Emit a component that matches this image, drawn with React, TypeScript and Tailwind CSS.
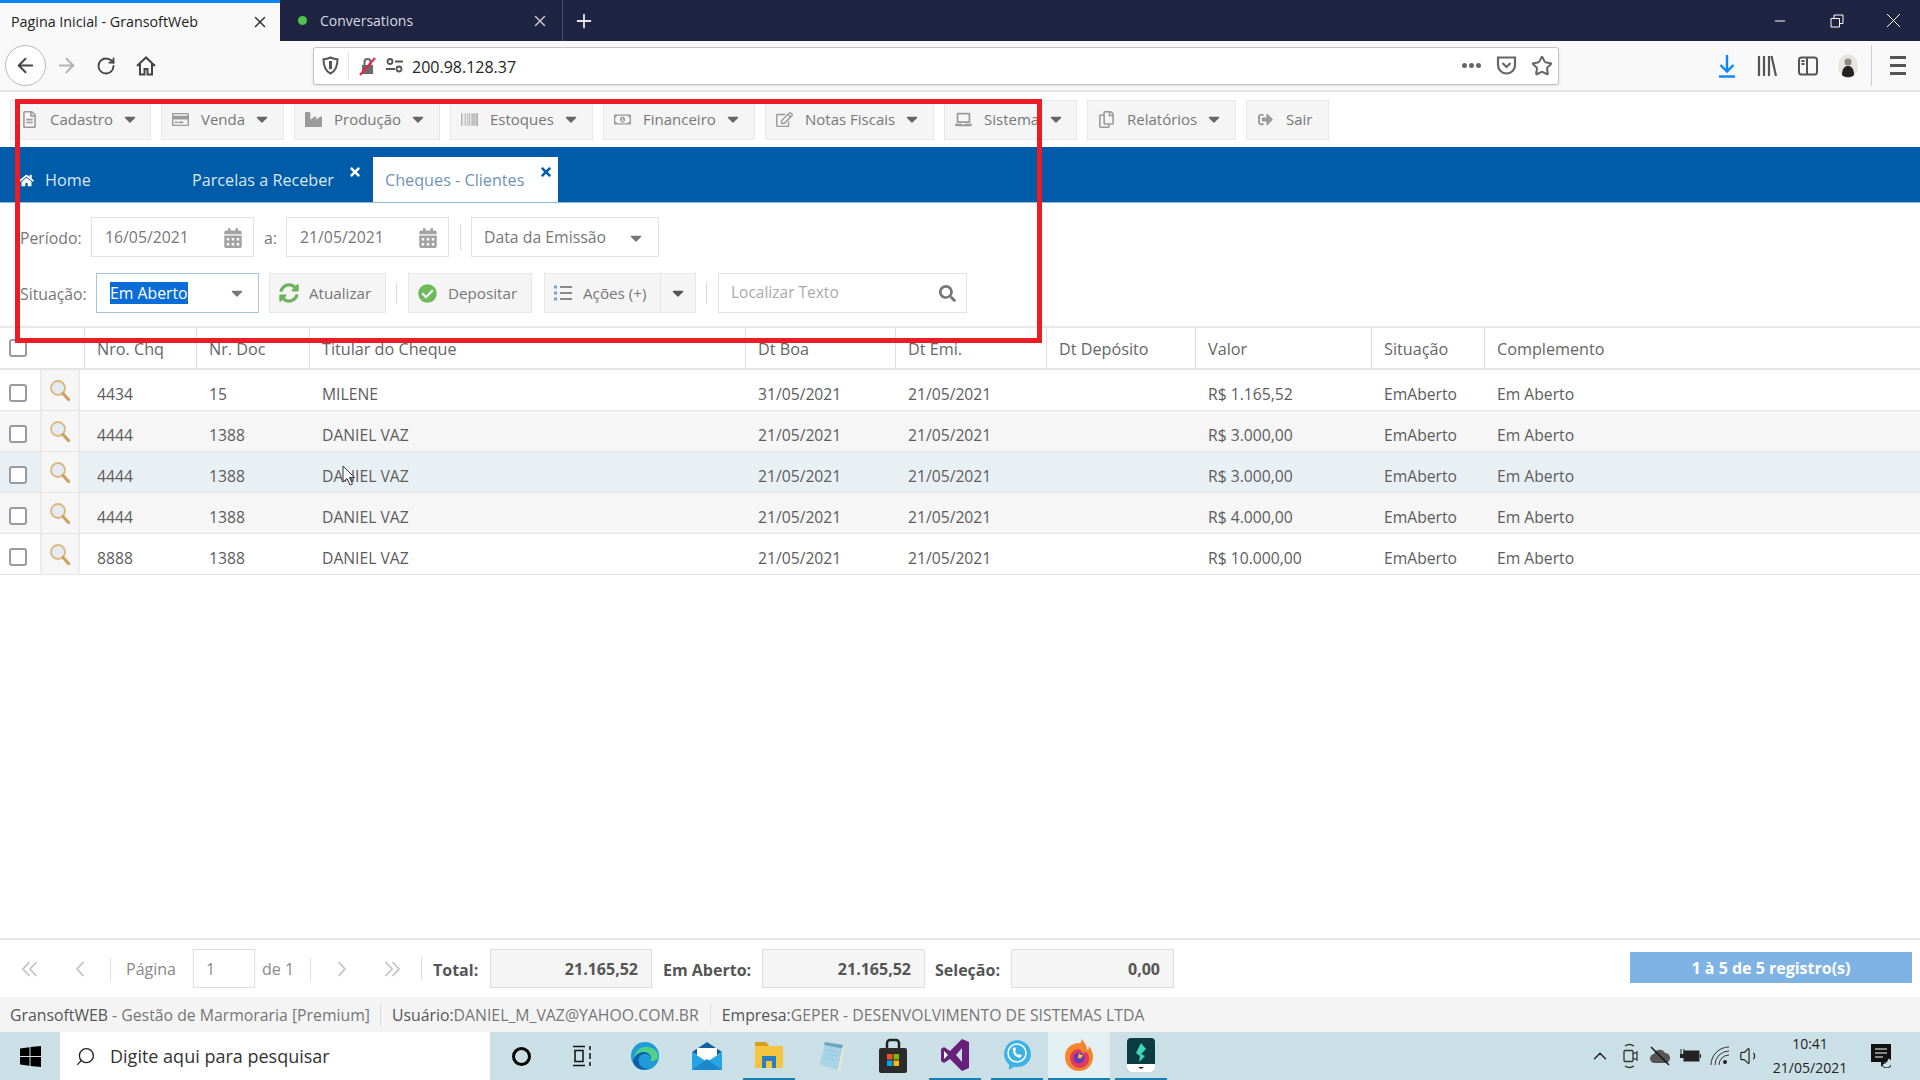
import type { ReactNode } from "react";
import { ArrowLeft, ArrowRight, ChevronUp, Minus, Plus, RotateCw, Search, Star, Volume1, X } from "lucide-react";
import {
  FaBarcode,
  FaCalendarAlt,
  FaCaretDown,
  FaCheckCircle,
  FaHome,
  FaIndustry,
  FaRegCopy,
  FaRegCreditCard,
  FaRegEdit,
  FaRegFileAlt,
  FaRegMoneyBillAlt,
  FaLaptop,
  FaSearch,
  FaSignOutAlt,
  FaSyncAlt,
  FaTimes,
} from "react-icons/fa";

const menus = [
  { label: "Cadastro", icon: <FaRegFileAlt />, width: "w-[141px]" },
  { label: "Venda", icon: <FaRegCreditCard />, width: "w-[123px]" },
  { label: "Produção", icon: <FaIndustry />, width: "w-[146px]" },
  { label: "Estoques", icon: <FaBarcode />, width: "w-[143px]" },
  { label: "Financeiro", icon: <FaRegMoneyBillAlt />, width: "w-[152px]" },
  { label: "Notas Fiscais", icon: <FaRegEdit />, width: "w-[169px]" },
  { label: "Sistema", icon: <FaLaptop />, width: "w-[133px]" },
  { label: "Relatórios", icon: <FaRegCopy />, width: "w-[149px]" },
];

const rows = [
  { chq: "4434", doc: "15", nome: "MILENE", boa: "31/05/2021", valor: "R$ 1.165,52", bg: "bg-white" },
  { chq: "4444", doc: "1388", nome: "DANIEL VAZ", boa: "21/05/2021", valor: "R$ 3.000,00", bg: "bg-[#f6f6f6]" },
  { chq: "4444", doc: "1388", nome: "DANIEL VAZ", boa: "21/05/2021", valor: "R$ 3.000,00", bg: "bg-[#e9f0f4]" },
  { chq: "4444", doc: "1388", nome: "DANIEL VAZ", boa: "21/05/2021", valor: "R$ 4.000,00", bg: "bg-[#f6f6f6]" },
  { chq: "8888", doc: "1388", nome: "DANIEL VAZ", boa: "21/05/2021", valor: "R$ 10.000,00", bg: "bg-white" },
];

const Divider = ({ className = "h-6" }: { className?: string }) => <div className={`w-px bg-[#dddddd] ${className}`} />;

const Checkbox = () => <div className="h-[18px] w-[18px] rounded-[3px] border-2 border-[#9a9aa5] bg-white" />;

const Magnifier = () => (
  <svg width="22" height="24" viewBox="0 0 22 24" fill="none">
    <circle cx="9" cy="9" r="7" fill="#e4ebf3" stroke="#dcb67c" strokeWidth="1.800" />
    <path d="M14 14.500l5.500 6" stroke="#cf9f5e" strokeWidth="3.200" strokeLinecap="round" />
  </svg>
);

const HeaderCell = ({ width, children }: { width: string; children: ReactNode }) => (
  <div className={`flex h-full items-center border-l border-[#e0e0e0] pl-[12px] pt-[2px] ${width}`}>{children}</div>
);

const BodyCell = ({ width, children }: { width: string; children?: ReactNode }) => (
  <div className={`pl-[13px] pt-[9px] ${width}`}>{children}</div>
);

const GridRow = ({ row }: { row: (typeof rows)[number] }) => (
  <div className={`flex h-[41px] items-center border-b border-[#e4e4e4] text-[15.700px] text-[#5c5c5c] ${row.bg}`}>
    <div className="flex w-10 justify-center pr-[4px] pt-[6px]">
      <Checkbox />
    </div>
    <div className="flex h-full w-10 justify-center border-x-2 border-[#ececec] bg-[#f6f6f6] pt-[9px]">
      <Magnifier />
    </div>
    <div className="w-1" />
    <BodyCell width="w-[112px]">{row.chq}</BodyCell>
    <BodyCell width="w-[113px]">{row.doc}</BodyCell>
    <BodyCell width="w-[436px]">{row.nome}</BodyCell>
    <BodyCell width="w-[150px]">{row.boa}</BodyCell>
    <BodyCell width="w-[151px]">21/05/2021</BodyCell>
    <BodyCell width="w-[149px]" />
    <BodyCell width="w-[176px]">{row.valor}</BodyCell>
    <BodyCell width="w-[113px]">EmAberto</BodyCell>
    <BodyCell width="flex-1">Em Aberto</BodyCell>
  </div>
);

const ToolButton = ({ children, className }: { children: ReactNode; className: string }) => (
  <div className={`flex h-10 items-center border border-[#e6e6e6] bg-[#f5f5f5] text-[15.200px] text-[#777777] ${className}`}>
    {children}
  </div>
);

const TotalField = ({ label, value, labelClass, width }: { label: string; value: string; labelClass: string; width: string }) => (
  <>
    <span className={`mt-[2px] font-bold text-[#555555] ${labelClass}`}>{label}</span>
    <div className={`flex h-[39px] items-center justify-end border border-[#dedede] bg-[#f5f5f5] pr-[13px] font-bold text-[#555555] ${width}`}>
      {value}
    </div>
  </>
);

const TaskIcon = ({ children, running, active }: { children: ReactNode; running?: boolean; active?: boolean }) => (
  <div className={`flex h-full w-[62px] items-center justify-center ${active ? "bg-[#e3eff2]" : ""}`}>
    <div className={`flex h-full w-[52px] items-center justify-center ${running ? "border-b-2 border-[#1a7fb0]" : ""} ${active ? "w-full" : ""}`}>
      {children}
    </div>
  </div>
);

export default function App() {
  return (
    <div className="relative flex h-[1080px] w-[1920px] flex-col overflow-hidden bg-white font-['Open_Sans',sans-serif]">
      {/* browser tabs */}
      <div className="flex h-[41px] shrink-0 items-stretch bg-[#1f2442] text-[14.3px]">
        <div className="flex w-[280px] items-center justify-between border-t-[3px] border-[#0a84ff] bg-[#f9f9fa] pl-[11px] pr-[11px] text-[#222222]">
          <span>Pagina Inicial - GransoftWeb</span>
          <X size={18} strokeWidth={2} color="#333333" />
        </div>
        <div className="flex w-[283px] items-center justify-between border-r border-[#4a4e68] pl-[18px] pr-[13px] text-[#d8d9e0]">
          <span className="flex items-center gap-[13px] text-[14px]">
            <span className="h-[9px] w-[9px] rounded-full bg-[#4cc34a]" />
            Conversations
          </span>
          <X size={18} strokeWidth={2} color="#c8c9d2" />
        </div>
        <div className="flex w-[42px] items-center justify-center">
          <Plus size={22} strokeWidth={2} color="#e4e4ea" />
        </div>
        <div className="flex flex-1 items-center justify-end pr-[19px]">
          <Minus size={16} strokeWidth={1.5} color="#ffffff" />
          <svg className="ml-[42px] mr-[42px]" width="14" height="14" viewBox="0 0 14 14" fill="none" stroke="#ffffff">
            <path d="M1 4.500h8.500V13H1zM4 4.500V1h9v8.500H9.500" />
          </svg>
          <svg width="15" height="15" viewBox="0 0 15 15" fill="none" stroke="#ffffff">
            <path d="M1 1l13 13M14 1L1 14" />
          </svg>
        </div>
      </div>

      {/* browser toolbar */}
      <div className="flex h-[51px] shrink-0 items-center border-b-2 border-[#e3e3e3] bg-[#f9f9fa] text-[#555555]">
        <div className="ml-[5px] flex h-[41px] w-[41px] items-center justify-center rounded-full border border-[#b8b8b8] bg-white">
          <ArrowLeft size={23} strokeWidth={2} color="#444444" />
        </div>
        <ArrowRight className="ml-[9px]" size={23} strokeWidth={2} color="#b1b1b3" />
        <RotateCw className="ml-[18px]" size={20} strokeWidth={2.2} color="#444444" />
        <svg className="ml-[19px]" width="22" height="22" viewBox="0 0 22 22" fill="none" stroke="#444444" strokeWidth="2">
          <path d="M2 11l9-8.500L20 11M5 9v10.500h4.500V14h3v5.500H17V9" />
        </svg>
        <div className="ml-[156px] flex h-[38px] w-[1246px] items-center rounded-[3px] border border-[#c4c4c4] bg-white shadow-sm">
          <svg className="ml-[8px]" width="17" height="19" viewBox="0 0 17 19" fill="none" stroke="#555555" strokeWidth="2">
            <path d="M8.500 1.500c2.500 1.200 4.500 1.700 7 1.700 0 6.500-1.500 11.500-7 14.300-5.500-2.800-7-7.800-7-14.300 2.500 0 4.500-.5 7-1.700z" />
            <path d="M8.500 5v8" strokeWidth="3" />
          </svg>
          <div className="ml-[9px] h-7 w-px bg-[#e3e3e3]" />
          <svg className="ml-[10px]" width="18" height="20" viewBox="0 0 18 20" fill="none">
            <path d="M3 9h11v9H3z" fill="#6a6a6a" />
            <path d="M5.500 9V6a3 3 0 016 0v3" stroke="#6a6a6a" strokeWidth="2" />
            <path d="M1 19L16 2" stroke="#e22850" strokeWidth="2.200" />
          </svg>
          <svg className="ml-[9px]" width="17" height="15" viewBox="0 0 17 15" fill="none" stroke="#555555" strokeWidth="1.800">
            <circle cx="4" cy="3.500" r="2.500" />
            <path d="M9 3.500h8M0 11h9" />
            <circle cx="13" cy="11" r="2.500" />
          </svg>
          <span className="ml-[9px] mt-[2px] text-[16px] text-[#222222]">200.98.128.37</span>
          <div className="flex-1" />
          <span className="flex gap-[2px]">
            <span className="h-[5px] w-[5px] rounded-full bg-[#666666]" />
            <span className="h-[5px] w-[5px] rounded-full bg-[#666666]" />
            <span className="h-[5px] w-[5px] rounded-full bg-[#666666]" />
          </span>
          <svg className="ml-[15px]" width="21" height="21" viewBox="0 0 21 21" fill="none" stroke="#666666" strokeWidth="2.200">
            <path d="M2 2.500h17v7.500a8.500 8.500 0 01-17 0z" />
            <path d="M6.500 8l4 4 4-4" />
          </svg>
          <Star className="ml-[14px] mr-[5px]" size={22} strokeWidth={2.200} color="#666666" />
        </div>
        <div className="flex-1" />
        <svg width="18" height="24" viewBox="0 0 18 24" fill="none" stroke="#0a84ff" strokeWidth="2.400">
          <path d="M9 1v16M2.500 11L9 17.500 15.500 11" />
          <path d="M1 22.500h16" />
        </svg>
        <svg className="ml-[21px]" width="20" height="22" viewBox="0 0 20 22" fill="none" stroke="#555555" strokeWidth="2.200">
          <path d="M2 1v20M7 1v20M12 1v20M14.500 1L19 21" />
        </svg>
        <svg className="ml-[21px]" width="20" height="20" viewBox="0 0 20 20" fill="none" stroke="#555555" strokeWidth="2">
          <rect x="1" y="1.500" width="18" height="17" rx="2.500" />
          <path d="M9 1.500v17" />
          <path d="M3.500 5h3M3.500 8h3" />
        </svg>
        <svg className="ml-[20px]" width="20" height="24" viewBox="0 0 20 24">
          <ellipse cx="10" cy="12" rx="10" ry="12" fill="#e6e6dc" />
          <circle cx="10" cy="8" r="3.500" fill="#8a8a84" />
          <path d="M4 21c0-7 3-9 6-9s6 2 6 9c-3 3-9 3-12 0z" fill="#222222" />
        </svg>
        <div className="ml-[13px] h-[41px] w-px bg-[#d0d0d0]" />
        <div className="ml-[18px] mr-[14px] flex w-[16px] flex-col gap-[5px]">
          <div className="h-[3px] bg-[#555555]" />
          <div className="h-[3px] bg-[#555555]" />
          <div className="h-[3px] bg-[#555555]" />
        </div>
      </div>

      {/* menu */}
      <div className="flex h-[55px] shrink-0 items-start gap-[10px] pl-[10px] pt-[8px] text-[15px] text-[#777777]">
        {menus.map((m) => (
          <div key={m.label} className={`flex h-[40px] items-center border border-[#e8e8e8] bg-[#f5f5f5] pb-[2px] pl-[10px] ${m.width}`}>
            <span className="w-[20px] text-[17px] text-[#9a9a9a]">{m.icon}</span>
            <span className="ml-[9px]">{m.label}</span>
            <FaCaretDown className="ml-[8px] text-[#666666]" size={18} />
          </div>
        ))}
        <div className="flex h-[40px] w-[83px] items-center border border-[#e8e8e8] bg-[#f5f5f5] pb-[2px] pl-[11px]">
          <FaSignOutAlt className="text-[#9a9a9a]" size={15} />
          <span className="ml-[13px]">Sair</span>
        </div>
      </div>

      {/* abas */}
      <div className="flex h-[56px] shrink-0 items-end border-b border-[#8fb8dc] bg-[#005ba8] text-[16.200px] text-[#d9e7f3]">
        <div className="flex h-[45px] w-[192px] items-center pl-[19px] pt-[2px]">
          <FaHome size={15} color="#ffffff" />
          <span className="ml-[11px]">Home</span>
        </div>
        <div className="relative flex h-[45px] w-[181px] items-center pt-[2px]">
          Parcelas a Receber
          <FaTimes className="absolute right-[11px] top-[8px]" size={14} color="#ffffff" />
        </div>
        <div className="relative flex h-[45px] w-[185px] items-center bg-white pl-[12px] pt-[2px] text-[#6d94b8]">
          Cheques - Clientes
          <FaTimes className="absolute right-[5px] top-[8px]" size={14} color="#005ba8" />
        </div>
      </div>

      {/* filtros */}
      <div className="flex h-[125px] shrink-0 flex-col gap-[16px] border-b-2 border-[#e8e8e8] pl-[20px] pt-[14px] text-[15.8px] text-[#777777]">
        <div className="flex h-10 items-center">
          <span className="mt-[3px] w-[71px]">Período:</span>
          <div className="flex h-10 w-[163px] items-center justify-between border border-[#e2e2e2] pl-[13px] pr-[10px] pt-[2px]">
            16/05/2021
            <FaCalendarAlt size={20} color="#a3a3a3" />
          </div>
          <span className="ml-[10px] mt-[3px] w-[22px]">a:</span>
          <div className="flex h-10 w-[163px] items-center justify-between border border-[#e2e2e2] pl-[13px] pr-[10px] pt-[2px]">
            21/05/2021
            <FaCalendarAlt size={20} color="#a3a3a3" />
          </div>
          <Divider className="ml-[11px] h-[26px]" />
          <div className="ml-[10px] flex h-10 w-[188px] items-center justify-between border border-[#e2e2e2] pl-[12px] pr-[13px] pt-[2px]">
            Data da Emissão
            <FaCaretDown size={18} color="#777777" />
          </div>
        </div>
        <div className="flex h-10 items-center">
          <span className="mt-[3px] w-[76px]">Situação:</span>
          <div className="flex h-10 w-[163px] items-center justify-between border border-[#a3c7e2] pl-[13px] pr-[12px]">
            <span className="bg-[#0a6cd6] leading-[22px] text-white">Em Aberto</span>
            <FaCaretDown size={18} color="#777777" />
          </div>
          <ToolButton className="ml-[10px] w-[117px] pl-[9px]">
            <FaSyncAlt size={20} color="#6bb35c" />
            <span className="ml-[10px]">Atualizar</span>
          </ToolButton>
          <Divider className="ml-[10px] h-[22px]" />
          <ToolButton className="ml-[11px] w-[124px] pl-[9px]">
            <FaCheckCircle size={19} color="#6cbb5a" />
            <span className="ml-[11px]">Depositar</span>
          </ToolButton>
          <ToolButton className="ml-[12px] w-[117px] pl-[9px]">
            <svg width="18" height="18" viewBox="0 0 18 18">
              <path d="M0 1.500h3v3H0zM0 7.500h3v3H0zM0 13.500h3v3H0z" fill="#6ea6dc" />
              <path d="M6 3h12M6 9h12M6 15h12" stroke="#666666" strokeWidth="1.600" />
            </svg>
            <span className="ml-[11px]">Ações (+)</span>
          </ToolButton>
          <ToolButton className="w-[35px] justify-center border-l-0">
            <FaCaretDown size={18} color="#555555" />
          </ToolButton>
          <Divider className="ml-[10px] h-[22px]" />
          <div className="ml-[11px] flex h-10 w-[249px] items-center justify-between border border-[#e2e2e2] pl-[12px] pr-[10px] text-[15.500px] text-[#aaaaaa]">
            Localizar Texto
            <FaSearch size={17} color="#777777" />
          </div>
        </div>
      </div>

      {/* grid */}
      <div className="flex h-[42px] shrink-0 items-center border-b-2 border-[#e4e4e4] text-[16.200px] text-[#666666]">
        <div className="flex w-[84px] pl-[9px]">
          <Checkbox />
        </div>
        <HeaderCell width="w-[112px]">Nro. Chq</HeaderCell>
        <HeaderCell width="w-[113px]">Nr. Doc</HeaderCell>
        <HeaderCell width="w-[436px]">Titular do Cheque</HeaderCell>
        <HeaderCell width="w-[150px]">Dt Boa</HeaderCell>
        <HeaderCell width="w-[151px]">Dt Emi.</HeaderCell>
        <HeaderCell width="w-[149px]">Dt Depósito</HeaderCell>
        <HeaderCell width="w-[176px]">Valor</HeaderCell>
        <HeaderCell width="w-[113px]">Situação</HeaderCell>
        <HeaderCell width="flex-1">Complemento</HeaderCell>
      </div>
      <div className="flex-1">
        {rows.map((r, i) => (
          <GridRow key={i} row={r} />
        ))}
      </div>

      {/* rodape da grid */}
      <div className="flex h-[59px] shrink-0 items-center border-t-2 border-[#e6e6e6] text-[16px] text-[#8a8a8a]">
        <svg className="ml-[21px]" width="18" height="18" viewBox="0 0 18 18" fill="none" stroke="#c4c4c4" strokeWidth="1.800">
          <path d="M8.500 2L2 9l6.500 7M15.500 2L9 9l6.500 7" />
        </svg>
        <svg className="ml-[36px]" width="10" height="18" viewBox="0 0 10 18" fill="none" stroke="#c4c4c4" strokeWidth="1.800">
          <path d="M8.500 2L2 9l6.500 7" />
        </svg>
        <Divider className="ml-[25px] h-[22px]" />
        <span className="ml-[15px] w-[50px] text-[#888888]">Página</span>
        <div className="ml-[17px] flex h-[39px] w-[62px] items-center border border-[#dedede] pl-[12px]">1</div>
        <span className="ml-[7px] w-[32px] whitespace-nowrap">de 1</span>
        <Divider className="ml-[16px] h-[22px]" />
        <svg className="ml-[26px]" width="10" height="18" viewBox="0 0 10 18" fill="none" stroke="#c4c4c4" strokeWidth="1.800">
          <path d="M1.500 2L8 9l-6.500 7" />
        </svg>
        <svg className="ml-[36px]" width="18" height="18" viewBox="0 0 18 18" fill="none" stroke="#c4c4c4" strokeWidth="1.800">
          <path d="M2.500 2L9 9l-6.500 7M9.500 2L16 9l-6.500 7" />
        </svg>
        <Divider className="ml-[20px] h-[22px]" />
        <TotalField label="Total:" value="21.165,52" labelClass="w-[68px] pl-[11px]" width="w-[162px]" />
        <TotalField label="Em Aberto:" value="21.165,52" labelClass="w-[110px] pl-[11px]" width="w-[163px]" />
        <TotalField label="Seleção:" value="0,00" labelClass="w-[86px] pl-[10px]" width="w-[163px]" />
        <div className="flex-1" />
        <div className="mb-[2px] mr-2 flex h-[31px] w-[282px] items-center justify-center bg-[#7fb3e3] font-bold text-white">
          1 à 5 de 5 registro(s)
        </div>
      </div>

      {/* status */}
      <div className="flex h-[35px] shrink-0 items-center bg-[#f4f4f4] pl-[10px] text-[15.800px] text-[#777777]">
        <span className="pt-[2px]">
          <span className="text-[#555555]">GransoftWEB</span> - Gestão de Marmoraria [Premium]
        </span>
        <Divider className="ml-[10px] h-[22px]" />
        <span className="ml-[11px] pt-[2px]">
          <span className="text-[#555555]">Usuário:</span>DANIEL_M_VAZ@YAHOO.COM.BR
        </span>
        <Divider className="ml-[11px] h-[22px]" />
        <span className="ml-[11px] pt-[2px]">
          <span className="text-[#555555]">Empresa:</span>GEPER - DESENVOLVIMENTO DE SISTEMAS LTDA
        </span>
      </div>

      {/* barra de tarefas */}
      <div className="flex h-[48px] shrink-0 items-center bg-[#cbe0e6]">
        <div className="flex w-[60px] justify-center">
          <svg width="21" height="21" viewBox="0 0 21 21" fill="#000000">
            <path d="M0 2.500L9.500 1.200V10H0zM10.500 1L21 0v10H10.500zM0 11h9.500v8.800L0 18.500zM10.500 11H21v10l-10.500-1z" />
          </svg>
        </div>
        <div className="flex h-full w-[430px] items-center bg-white pl-[15px] text-[18px] text-[#333333]">
          <Search size={21} strokeWidth={1.500} className="-scale-x-100" color="#222222" />
          <span className="ml-[14px]">Digite aqui para pesquisar</span>
        </div>
        <TaskIcon>
          <div className="h-[19px] w-[19px] rounded-full border-[3px] border-black" />
        </TaskIcon>
        <TaskIcon>
          <svg width="22" height="22" viewBox="0 0 22 22" fill="none" stroke="#111111" strokeWidth="1.500">
            <path d="M1 1.500h12M1 20.500h12M3 5.500h8v11H3zM18 1v4M18 8v6M18 17v4" />
          </svg>
        </TaskIcon>
        <TaskIcon>
          <svg width="30" height="30" viewBox="0 0 30 30">
            <circle cx="15" cy="15" r="14" fill="#1f9bd8" />
            <path d="M3 20C6 8 22 6 27 15c1 4-3 6-7 5 2-3 0-7-5-7-6 0-8 6-5 11 2 3 6 4 9 3-7 4-15 0-16-7z" fill="#0f5fa8" />
            <path d="M14 6c7-1 14 3 14 10 0 3-4 5-8 4 3-4-1-9-6-9-4 0-8 2-10 6 1-6 5-10 10-11z" fill="#4fd18a" />
          </svg>
        </TaskIcon>
        <TaskIcon>
          <svg width="32" height="30" viewBox="0 0 32 30">
            <path d="M1 11L16 1l15 10-15 9z" fill="#14609f" />
            <path d="M6 7h20v8l-10 6-10-6z" fill="#ffffff" />
            <path d="M1 11l15 10 15-10v18H1z" fill="#26a5e4" />
            <path d="M1 29l15-11 15 11z" fill="#1b87cc" />
          </svg>
        </TaskIcon>
        <TaskIcon running>
          <svg width="30" height="28" viewBox="0 0 30 28">
            <path d="M1 1h11l3 4h14v22H1z" fill="#f5c542" />
            <path d="M1 1h11l3 4H1z" fill="#d99e1f" />
            <path d="M8 15h14v12h-4v-7h-6v7H8z" fill="#2a7fc4" />
          </svg>
        </TaskIcon>
        <TaskIcon>
          <svg width="30" height="32" viewBox="0 0 30 32">
            <path d="M9 2l18 3-5 25-18-5z" fill="#a9d4e8" />
            <path d="M9 2l18 3-.7 3.500L8 5z" fill="#6aa6c0" />
            <path d="M22 30l5-25 1 2-4 24z" fill="#eee8c8" />
            <path d="M11 10l11 2M10.500 14l11 2M9.500 18l11 2" stroke="#8fc0d8" strokeWidth="0.800" />
          </svg>
        </TaskIcon>
        <TaskIcon>
          <svg width="30" height="36" viewBox="0 0 30 36">
            <path d="M9 11V5a3 3 0 013-3h6a3 3 0 013 3v6" fill="none" stroke="#222222" strokeWidth="2.500" />
            <rect x="1" y="10" width="28" height="25" rx="2" fill="#2b2b2b" />
            <rect x="9" y="16" width="5.500" height="5.500" fill="#f25022" />
            <rect x="15.500" y="16" width="5.500" height="5.500" fill="#7fba00" />
            <rect x="9" y="22.500" width="5.500" height="5.500" fill="#00a4ef" />
            <rect x="15.500" y="22.500" width="5.500" height="5.500" fill="#ffb900" />
          </svg>
        </TaskIcon>
        <TaskIcon running>
          <svg width="30" height="34" viewBox="0 0 30 34">
            <path d="M22 1l7 3v26l-7 3-12-12-6 4-3-2V11l3-2 6 4zM22 10l-6 7 6 7z" fill="#68217a" fillRule="evenodd" />
            <path d="M4 13v8l4-4z" fill="#ffffff" />
          </svg>
        </TaskIcon>
        <TaskIcon running>
          <svg width="30" height="32" viewBox="0 0 30 32">
            <path d="M15 1a14 14 0 0113 19c-2 5-7 8-13 8-1 0-2 0-3-.2L7 31v-5.500A14 14 0 0115 1z" fill="#3db2e6" />
            <circle cx="15" cy="14" r="9" fill="none" stroke="#ffffff" strokeWidth="1.500" />
            <path d="M11 9c-1 5 2 9 7 10l2-2.500-3-1.500-1 1c-1.500-1-2.500-2.500-3-4l1.200-1L13 8z" fill="#ffffff" />
          </svg>
        </TaskIcon>
        <TaskIcon running active>
          <svg width="30" height="34" viewBox="0 0 30 34">
            <path d="M15 5C8 5 1 10 1 19c0 8 6 14 14 14s14-6 14-14c0-5-2-8-4-11 0 3-1 4-2 4 0-4-2-8-6-11 1 4-1 5-2 4z" fill="#f5862b" />
            <path d="M15 11c-5 0-9 4-9 9s4 10 10 10c5 0 9-4 9-9s-3-7-5-8c1 2 0 3-1 3-1-2-2-4-4-5z" fill="#e03a5c" />
            <circle cx="15" cy="20" r="5.500" fill="#6b3bb8" />
            <path d="M15 15c1 2 3 2 4 2-1 3-3 4-5 3z" fill="#f7c03a" />
          </svg>
        </TaskIcon>
        <TaskIcon running>
          <svg width="28" height="34" viewBox="0 0 28 34">
            <rect x="0" y="0" width="28" height="34" rx="4" fill="#0b3c43" />
            <path d="M0 26h28v4a4 4 0 01-4 4H4a4 4 0 01-4-4z" fill="#ffffff" />
            <path d="M14 5l5 6-5 5 4 2-6 6 1-6-4-3z" fill="#3fd8b4" />
            <path d="M11 29h6l-3 2z" fill="#222222" />
          </svg>
        </TaskIcon>
        <div className="flex-1" />
        <ChevronUp size={22} strokeWidth={1.500} color="#222222" />
        <svg className="ml-[11px]" width="16" height="26" viewBox="0 0 16 26" fill="none" stroke="#333333" strokeWidth="1.300">
          <path d="M3 3a8 8 0 019 0M3 23a8 8 0 009 0" />
          <rect x="2" y="7.500" width="9" height="11" rx="1" />
          <path d="M11 11l4-2v8l-4-2" />
        </svg>
        <svg className="ml-[11px]" width="22" height="22" viewBox="0 0 22 22" fill="none">
          <path d="M6 18a4.500 4.500 0 01-1-9 6 6 0 0111-1 5 5 0 013 9l-2 1z" fill="#555555" />
          <path d="M2 2l18 18" stroke="#111111" strokeWidth="1.500" />
        </svg>
        <svg className="ml-[8px]" width="22" height="16" viewBox="0 0 22 16">
          <rect x="5" y="3" width="15" height="10" fill="#222222" stroke="#222222" />
          <path d="M1 6h5v4H1zM21 6h1v4h-1z" fill="#222222" />
          <path d="M2 1v5M5 1v5" stroke="#222222" />
        </svg>
        <svg className="ml-[9px]" width="20" height="20" viewBox="0 0 20 20" fill="none" stroke="#333333">
          <path d="M1 19A18 18 0 0119 1M5 19A14 14 0 0119 5M9 19a10 10 0 0110-10" />
          <circle cx="15" cy="16" r="2" fill="#222222" stroke="none" />
        </svg>
        <Volume1 className="ml-[9px]" size={22} strokeWidth={1.300} color="#222222" />
        <div className="ml-[4px] flex w-[90px] flex-col items-center text-[14px] leading-[24px] text-[#222222]">
          <span>10:41</span>
          <span>21/05/2021</span>
        </div>
        <div className="ml-[16px] mr-[29px]">
          <svg width="20" height="24" viewBox="0 0 20 24">
            <path d="M0 0h20v18h-6l-4 5v-5H0z" fill="#111111" />
            <path d="M4 5h12M4 9h12M4 13h8" stroke="#ffffff" strokeWidth="1.200" />
            <path d="M17 14a5 5 0 11-6 6 6 6 0 006-6z" fill="#cbe0e6" stroke="#111111" />
          </svg>
        </div>
      </div>

      {/* marcacao vermelha sobre a pagina */}
      <div className="pointer-events-none absolute left-[15px] top-[99px] h-[244px] w-[1027px] border-[5px] border-[#ed1c24]" />
      <svg className="absolute left-[342px] top-[465px]" width="14" height="22" viewBox="0 0 14 22">
        <path d="M1 1v16l4-3.500 3 6.500 2.500-1-3-6.500H12.500z" fill="#ffffff" stroke="#333333" />
      </svg>
    </div>
  );
}
